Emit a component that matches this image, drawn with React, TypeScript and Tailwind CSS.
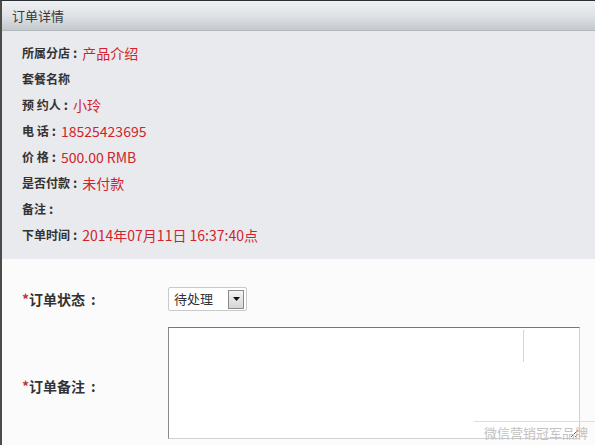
import React from "react";

const font = { fontFamily: '"Noto Sans CJK SC", "Noto Sans", sans-serif' };

function Row({ label, value, colon = true }: { label: string; value?: string; colon?: boolean }) {
  return (
    <div className="flex h-[26px] items-center">
      <span className="text-[12px] font-bold text-[#333]">{label}</span>
      {colon && <span className="ml-[3px] mr-[5px] text-[13px] font-bold text-[#333]">:</span>}
      {value && <span className="text-[14px] text-[#d2232a]">{value}</span>}
    </div>
  );
}

export default function App() {
  return (
    <div
      className="relative h-[445px] w-[595px] overflow-hidden border-l-2 border-t border-l-[#4b4b4b] border-t-[#2b3036] bg-[#fbfbfb]"
      style={font}
    >
      <div className="flex h-[30px] items-center border-b border-[#b3b8bd] bg-gradient-to-b from-[#eff1f4] via-[#dfe2e6] to-[#c4c9ce] pl-[10px] text-[13px] text-[#3a3a3a]">
        订单详情
      </div>
      <div className="bg-[#e9eaee] pb-[11px] pl-[20px] pt-[9px]">
        <Row label="所属分店" value="产品介绍" />
        <Row label="套餐名称" colon={false} />
        <Row label="预 约人" value="小玲" />
        <Row label="电 话" value="18525423695" />
        <Row label="价 格" value="500.00 RMB" />
        <Row label="是否付款" value="未付款" />
        <Row label="备注" />
        <Row label="下单时间" value="2014年07月11日 16:37:40点" />
      </div>
      <div className="grid grid-cols-[146px_1fr] pl-[20px] pt-[28px]">
        <div className="flex h-[24px] items-center text-[14px] font-bold text-[#333]">
          <span className="text-[#c0343a]">*</span>订单状态<span className="ml-[6px]">:</span>
        </div>
        <div className="flex h-[24px] w-[79px] items-center justify-between rounded-[2px] border border-[#c9c9c9] bg-white pl-[5px] pr-[2px]">
          <span className="text-[13px] text-[#333]">待处理</span>
          <span className="flex h-[19px] w-[16px] items-center justify-center border border-[#8a8a8a] bg-gradient-to-b from-[#f4f4f4] to-[#d6d6d6]">
            <svg width="7" height="4" viewBox="0 0 7 4">
              <path d="M0 0h7L3.5 4z" fill="#111" />
            </svg>
          </span>
        </div>
        <div className="mt-[16px] flex h-[112px] items-center pt-[6px] text-[14px] font-bold text-[#333]">
          <span className="text-[#c0343a]">*</span>订单备注<span className="ml-[6px]">:</span>
        </div>
        <textarea
          className="mt-[16px] h-[112px] w-[412px] border border-[#d0d0d0] border-l-[#8a8a8a] border-t-[#777] bg-white outline-none"
          readOnly
        />
      </div>
      <div className="absolute left-[521px] top-[329px] h-[32px] w-px bg-[#d6d6d6]" />
      <div className="absolute left-[472px] top-[420px] h-px w-[123px] bg-[#dedede]" />
      <div className="absolute left-[482px] top-[424px] text-[13px] leading-[16px] text-[#c2c2c2]">
        微信营销冠军品牌
      </div>
    </div>
  );
}
